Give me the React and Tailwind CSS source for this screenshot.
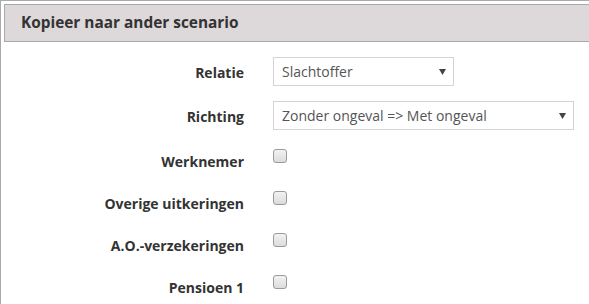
import React from 'react';

const font = { fontFamily: '"Open Sans", "Liberation Sans", sans-serif' };

const Caret = () => (
  <svg width="7" height="6" viewBox="0 0 7 6" className="shrink-0">
    <polygon points="0,0 7,0 3.5,6" fill="#444" />
  </svg>
);

const FakeSelect = ({ value, width }) => (
  <div
    className={`flex items-center justify-between h-[29px] border border-[#d4d4d4] bg-white pl-[8px] pr-[7px] text-[14px] text-[#555] ${width}`}
  >
    <span className="leading-5">{value}</span>
    <Caret />
  </div>
);

const SelectRow = ({ label, value, width, className = '' }) => (
  <div className={`flex items-center ${className}`}>
    <div className="w-[244px] text-right text-[14px] font-bold text-[#333] leading-5 pt-[3px]">{label}</div>
    <div className="ml-[29px]">
      <FakeSelect value={value} width={width} />
    </div>
  </div>
);

const CheckRow = ({ label }) => (
  <div className="flex items-start h-[42px]">
    <div className="w-[244px] text-right text-[14px] font-bold text-[#333] leading-5 pt-[6px]">{label}</div>
    <div className="ml-[29px] mt-[3px] w-[14px] h-[14px] rounded-[3px] border border-[#9a9a9a] bg-gradient-to-b from-[#f2f2f2] to-[#dcdcdc]" />
  </div>
);

export default function App() {
  return (
    <div style={font} className="w-[589px] h-[304px] overflow-hidden bg-white">
      <div className="border-l border-t border-[#aaa] pl-[3px] pt-[3px] h-full">
        <div className="h-[38px] border-l border-t border-b border-[#a9a9a9] bg-[#ddd8d9] flex items-center pl-[16px]">
          <h2 className="text-[15.4px] font-bold text-[#333] leading-5">Kopieer naar ander scenario</h2>
        </div>
        <div className="-ml-[4px] pt-[15px]">
          <SelectRow label="Relatie" value="Slachtoffer" width="w-[181px]" />
          <SelectRow label="Richting" value="Zonder ongeval => Met ongeval" width="w-[301px]" className="mt-[15px]" />
          <div className="mt-[16px]">
            <CheckRow label="Werknemer" />
            <CheckRow label="Overige uitkeringen" />
            <CheckRow label="A.O.-verzekeringen" />
            <CheckRow label="Pensioen 1" />
          </div>
        </div>
      </div>
    </div>
  );
}
